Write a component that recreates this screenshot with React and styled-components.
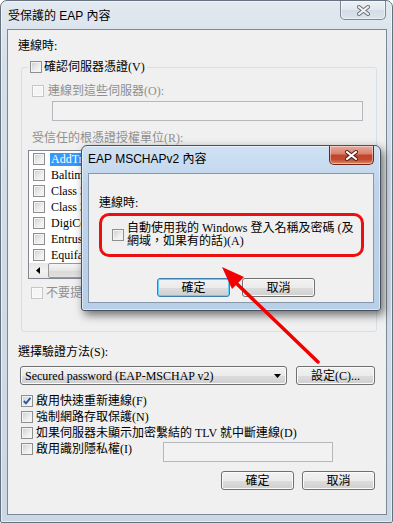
import React from 'react';
import styled, { createGlobalStyle } from 'styled-components';

const GlobalStyle = createGlobalStyle`
  html, body {
    margin: 0;
    padding: 0;
    background: #ffffff;
  }
  body {
    font-family: "Liberation Serif", "Noto Sans CJK TC", serif;
    font-size: 12px;
    color: #000;
  }
`;

const titleFont = `"Liberation Sans", "Noto Sans CJK TC", sans-serif`;

const Window = styled.div`
  position: relative;
  box-sizing: border-box;
  width: 393px;
  height: 523px;
  display: flex;
  flex-direction: column;
  border: 1px solid #66727f;
  border-radius: 7px 7px 2px 2px;
  background: linear-gradient(#e2e9f0, #d5dfe9 60px, #cbd7e3);
  box-shadow: inset 0 0 0 1px rgba(255, 255, 255, 0.55);
`;

const TitleBar = styled.div`
  display: flex;
  align-items: flex-start;
  justify-content: space-between;
  height: ${p => p.$h}px;
  padding-left: ${p => p.$pl}px;
  font-family: ${titleFont};
  flex: none;
`;

const TitleText = styled.span`
  margin-top: ${p => p.$mt}px;
  line-height: 16px;
  white-space: nowrap;
`;

const CloseButton = styled.div`
  box-sizing: border-box;
  display: flex;
  align-items: center;
  justify-content: center;
  width: ${p => p.$w}px;
  height: ${p => p.$h}px;
  margin-right: 6px;
  border: 1px solid ${p => (p.$red ? '#6b2619' : '#7d8894')};
  border-top: none;
  border-radius: 0 0 5px 5px;
  background: ${p =>
    p.$red
      ? 'linear-gradient(#eaa99a, #d98270 42%, #c4432b 52%, #c24a2f 75%, #dc8a66)'
      : 'linear-gradient(#edf1f5, #e0e7ee 50%, #d3dde7 52%, #dce4ec)'};
  box-shadow: inset 0 0 0 1px rgba(255, 255, 255, 0.45);
`;

const Client = styled.div`
  flex: 1;
  display: flex;
  flex-direction: column;
  align-items: flex-start;
  margin: ${p => p.$m};
  border: 1px solid ${p => p.$border};
  background: #f0f0f0;
`;

const Text = styled.div`
  height: 16px;
  line-height: 16px;
  white-space: nowrap;
  margin: ${p => p.$mt || 0}px 0 0 ${p => p.$ml || 0}px;
  color: ${p => (p.$disabled ? '#8f8f8f' : '#000')};
`;

const CheckRow = styled.div`
  display: flex;
  align-items: center;
  gap: ${p => p.$gap ?? 3}px;
  height: 16px;
  line-height: 16px;
  white-space: nowrap;
  margin: ${p => p.$mt || 0}px 0 0 ${p => p.$ml || 0}px;
  color: ${p => (p.$disabled ? '#8f8f8f' : '#000')};
`;

const Box = styled.span`
  box-sizing: border-box;
  flex: none;
  width: 12px;
  height: 12px;
  display: flex;
  align-items: center;
  justify-content: center;
  border: 1px solid ${p => (p.$disabled ? '#c6c6c6' : '#8e8f8f')};
  background: ${p =>
    p.$disabled ? '#f5f5f5' : 'linear-gradient(135deg, #c9ccd0, #eeeeee 60%, #fafafa)'};
  box-shadow: inset 0 0 0 1px ${p => (p.$disabled ? '#fbfbfb' : '#f3f3f3')};
`;

const Checkbox = ({ checked, disabled }) => (
  <Box $disabled={disabled}>
    {checked && (
      <svg width="10" height="10" viewBox="0 0 10 10">
        <path d="M1.8 5 L4 7.4 L8.4 1.8" fill="none" stroke="#2d56a6" strokeWidth="1.9" />
      </svg>
    )}
  </Box>
);

const GroupBox = styled.fieldset`
  box-sizing: border-box;
  width: 356px;
  min-width: 0;
  margin: 5px 0 0 13px;
  padding: 0 0 30px 0;
  border: 1px solid #d5dfe5;
  border-radius: 3px;
  display: flex;
  flex-direction: column;
  align-items: flex-start;
`;

const Legend = styled.legend`
  display: flex;
  align-items: center;
  gap: 2px;
  height: 16px;
  line-height: 16px;
  margin-left: 6px;
  padding: 0 2px;
  white-space: nowrap;
`;

const TextInput = styled.div`
  box-sizing: border-box;
  width: ${p => p.$w}px;
  height: 20px;
  margin: ${p => p.$mt || 0}px 0 0 ${p => p.$ml || 0}px;
  border: 1px solid #b5b9bd;
  background: #f2f2f2;
`;

const ListBox = styled.div`
  box-sizing: border-box;
  width: 335px;
  height: 129px;
  margin: 4px 0 0 6px;
  border: 1px solid #828790;
  background: #fff;
  display: flex;
  flex-direction: column;
`;

const ListItems = styled.div`
  flex: 1;
  display: flex;
  flex-direction: column;
  overflow: hidden;
`;

const ListItem = styled.div`
  display: flex;
  align-items: center;
  gap: 5px;
  height: 16px;
  flex: none;
  padding-left: 4px;
  white-space: nowrap;
`;

const ItemText = styled.span`
  line-height: 13px;
  padding: 0 2px 0 1px;
  background: ${p => (p.$selected ? '#3399ff' : 'transparent')};
  color: ${p => (p.$selected ? '#fff' : '#000')};
`;

const ScrollBar = styled.div`
  flex: none;
  height: 15px;
  display: flex;
  align-items: stretch;
  background: linear-gradient(#e6e6e6, #f1f1f1 50%, #e9e9e9);
`;

const ScrollArrow = styled.div`
  width: 17px;
  display: flex;
  align-items: center;
  justify-content: center;
`;

const ScrollThumb = styled.div`
  width: 240px;
  margin: 0 0 0 2px;
  border: 1px solid #979797;
  border-radius: 2px;
  background: linear-gradient(#f5f5f5, #e6e6e6 50%, #d9d9d9 51%, #e1e1e1);
`;

const Row = styled.div`
  display: flex;
  align-items: center;
  gap: ${p => p.$gap}px;
  margin: ${p => p.$mt}px 0 0 ${p => p.$ml || 0}px;
  align-self: ${p => (p.$end ? 'stretch' : 'auto')};
  justify-content: ${p => (p.$end ? 'flex-end' : 'flex-start')};
  padding-right: ${p => (p.$end ? 11 : 0)}px;
`;

const Button = styled.div`
  box-sizing: border-box;
  width: ${p => p.$w}px;
  height: 19px;
  display: flex;
  align-items: center;
  justify-content: center;
  line-height: 16px;
  white-space: nowrap;
  border: 1px solid ${p => (p.$focused ? '#3c7fb1' : '#707070')};
  border-radius: 3px;
  background: linear-gradient(#f2f2f2, #ebebeb 50%, #dddddd 51%, #cfcfcf);
  box-shadow: inset 0 0 0 1px ${p => (p.$focused ? '#66cff7' : '#fbfbfb')};
`;

const Combo = styled(Button)`
  justify-content: space-between;
  padding: 0 5px 0 4px;
`;

const InputRow = styled.div`
  display: grid;
  grid-template-columns: 142px 170px;
  align-items: start;
  height: 16px;
  margin-left: 13px;
`;

const Dialog = styled.div`
  position: absolute;
  left: 80px;
  top: 144px;
  box-sizing: border-box;
  width: 300px;
  height: 166px;
  display: flex;
  flex-direction: column;
  border: 1px solid #46525f;
  border-radius: 6px 6px 3px 3px;
  background: linear-gradient(#d0e1f3, #bfd4eb 40px, #b9cfe7);
  box-shadow: 3px 4px 10px rgba(0, 0, 0, 0.55), inset 0 0 0 1px rgba(255, 255, 255, 0.5);
`;

const Ring = styled.div`
  box-sizing: border-box;
  width: 265px;
  height: 44px;
  margin: 2px 0 0 10px;
  padding-left: 10px;
  display: flex;
  align-items: center;
  gap: 3px;
  border: 3px solid #ec0f0f;
  border-radius: 10px;
`;

const RingText = styled.div`
  line-height: 13px;
  white-space: nowrap;
`;

const Overlay = styled.svg`
  position: absolute;
  left: -1px;
  top: -1px;
  width: 393px;
  height: 523px;
  pointer-events: none;
`;

const CloseGlyph = ({ w, h, fill, edge }) => (
  <svg width={w + 4} height={h + 4} viewBox={`0 0 ${w + 4} ${h + 4}`}>
    <path d={`M2 2 L${w + 2} ${h + 2} M${w + 2} 2 L2 ${h + 2}`} stroke={edge} strokeWidth="4" strokeLinecap="square" />
    <path d={`M2 2 L${w + 2} ${h + 2} M${w + 2} 2 L2 ${h + 2}`} stroke={fill} strokeWidth="2" strokeLinecap="square" />
  </svg>
);

const certs = [
  'AddTrust External CA Root',
  'Baltimore CyberTrust Root',
  'Class 3 Public Primary Certification Authority',
  'Class 3 Public Primary Certification Authority - G5',
  'DigiCert Assured ID Root CA',
  'Entrust.net Certification Authority (2048)',
  'Equifax Secure Certificate Authority',
];

const options = [
  { label: '啟用快速重新連線(F)', checked: true },
  { label: '強制網路存取保護(N)' },
  { label: '如果伺服器未顯示加密繫結的 TLV 就中斷連線(D)' },
];

export default function App() {
  return (
    <>
      <GlobalStyle />
      <Window>
        <TitleBar $h={28} $pl={7}>
          <TitleText $mt={7}>受保護的 EAP 內容</TitleText>
          <CloseButton $w={46} $h={19}>
            <CloseGlyph w={9} h={7} fill="#eef2f6" edge="#6a6f75" />
          </CloseButton>
        </TitleBar>

        <Client $m="0 5px 7px 6px" $border="#7a8898">
          <Text $mt={8} $ml={10}>連線時:</Text>

          <GroupBox>
            <Legend>
              <Checkbox />
              確認伺服器憑證(V)
            </Legend>
            <CheckRow $mt={8} $ml={10} $gap={4} $disabled>
              <Checkbox disabled />
              連線到這些伺服器(O):
            </CheckRow>
            <TextInput $w={311} $mt={2} $ml={30} />
            <Text $mt={9} $ml={10} $disabled>受信任的根憑證授權單位(R):</Text>
            <ListBox>
              <ListItems>
                {certs.map((c, i) => (
                  <ListItem key={c}>
                    <Checkbox />
                    <ItemText $selected={i === 0}>{c}</ItemText>
                  </ListItem>
                ))}
              </ListItems>
              <ScrollBar>
                <ScrollArrow>
                  <svg width="4" height="7" viewBox="0 0 4 7">
                    <path d="M4 0 L0 3.5 L4 7 Z" fill="#000" />
                  </svg>
                </ScrollArrow>
                <ScrollThumb />
              </ScrollBar>
            </ListBox>
            <CheckRow $mt={6} $ml={9} $disabled>
              <Checkbox disabled />
              不要提示使用者授權新伺服器或信任的憑證授權單位(P)
            </CheckRow>
          </GroupBox>

          <Text $mt={12} $ml={10}>選擇驗證方法(S):</Text>
          <Row $gap={9} $mt={6} $ml={12}>
            <Combo $w={267}>
              <span>Secured password (EAP-MSCHAP v2)</span>
              <svg width="7" height="4" viewBox="0 0 7 4">
                <path d="M0 0 H7 L3.5 4 Z" fill="#000" />
              </svg>
            </Combo>
            <Button $w={79}>設定(C)...</Button>
          </Row>

          {options.map((o, i) => (
            <CheckRow key={o.label} $mt={i === 0 ? 8 : 0} $ml={13}>
              <Checkbox checked={o.checked} />
              {o.label}
            </CheckRow>
          ))}
          <InputRow>
            <CheckRow>
              <Checkbox />
              啟用識別隱私權(I)
            </CheckRow>
            <TextInput $w={170} $mt={1} />
          </InputRow>

          <Row $gap={8} $mt={14} $end>
            <Button $w={73}>確定</Button>
            <Button $w={73}>取消</Button>
          </Row>
        </Client>

        <Dialog>
          <TitleBar $h={27} $pl={6}>
            <TitleText $mt={5}>EAP MSCHAPv2 內容</TitleText>
            <CloseButton $w={45} $h={19} $red>
              <CloseGlyph w={9} h={7} fill="#ffffff" edge="#4a1a12" />
            </CloseButton>
          </TitleBar>
          <Client $m="0 6px 7px 6px" $border="#8798ab">
            <Text $mt={21} $ml={10}>連線時:</Text>
            <Ring>
              <Checkbox />
              <RingText>
                自動使用我的 Windows 登入名稱及密碼 (及
                <br />
                網域，如果有的話)(A)
              </RingText>
            </Ring>
            <Row $gap={12} $mt={21} $ml={68}>
              <Button $w={73} $focused>確定</Button>
              <Button $w={73}>取消</Button>
            </Row>
          </Client>
        </Dialog>

        <Overlay viewBox="0 0 393 523">
          <line x1="318" y1="362" x2="235" y2="282" stroke="#f20000" strokeWidth="3.5" strokeLinecap="round" />
          <polygon points="222,267 232,289 244,277" fill="#f20000" />
        </Overlay>
      </Window>
    </>
  );
}
